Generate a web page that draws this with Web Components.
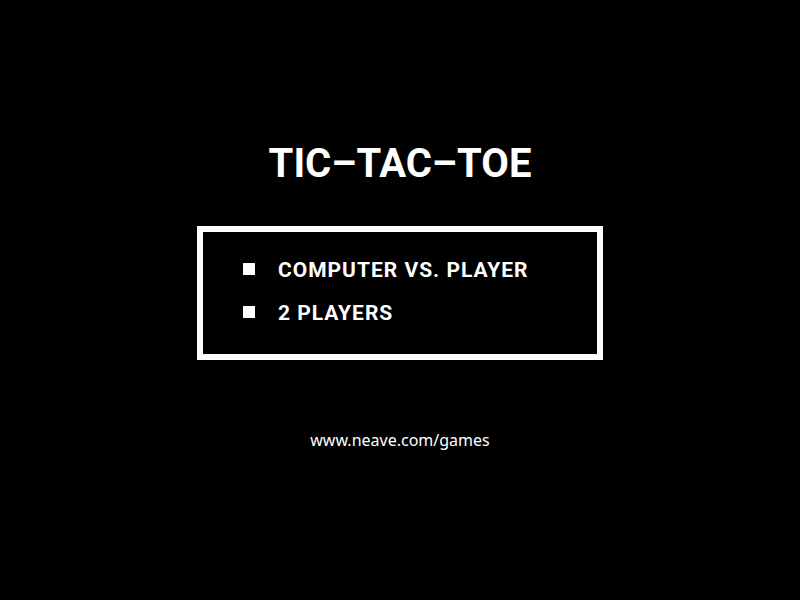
<!DOCTYPE html>
<html lang="en">
<head>
<meta charset="utf-8">
<title>Tic-Tac-Toe</title>
<style>
html,body{margin:0;height:100%;background:#000}
</style>
</head>
<body>
<tic-screen>
<game-title slot="title">TIC–TAC–TOE</game-title>
<mode-menu>
<mode-option>COMPUTER VS. PLAYER</mode-option>
<mode-option>2 PLAYERS</mode-option>
</mode-menu>
<site-link slot="footer" href="http://www.neave.com/games">www.neave.com/games</site-link>
</tic-screen>
<script>
const define = (name, html, setup) => customElements.define(name, class extends HTMLElement {
  constructor() {
    super();
    this.attachShadow({ mode: "open" }).innerHTML = html;
  }
  connectedCallback() { if (setup) setup(this); }
});
define("tic-screen", `<style>
:host{display:block;min-height:100%;background:#000;color:#fff;font-family:Roboto,"Liberation Sans",sans-serif}
main{display:flex;flex-direction:column;align-items:center;padding:144px 24px}
footer{margin-top:68px}
</style><main><slot name="title"></slot><slot></slot><footer><slot name="footer"></slot></footer></main>`);
define("game-title", `<style>
:host{display:block}
h1{margin:0;font-size:40px;line-height:40px;font-weight:700;white-space:nowrap}
</style><h1><slot></slot></h1>`);
define("mode-menu", `<style>
:host{display:block;box-sizing:border-box;width:54%;min-width:406px;margin-top:42px;border:6px solid #fff;padding:26px 40px 29px}
nav{display:flex;flex-direction:column;align-items:flex-start;gap:19px}
</style><nav aria-label="Game mode"><slot></slot></nav>`);
define("mode-option", `<style>
:host{display:block}
button{display:flex;align-items:center;gap:23px;margin:0;padding:0;border:0;background:none;color:inherit;font:700 21px/24px Roboto,"Liberation Sans",sans-serif;letter-spacing:1px;cursor:pointer;white-space:nowrap}
svg{display:block;width:12px;height:12px;margin-bottom:2px}
</style><button type="button"><svg viewBox="0 0 12 12" aria-hidden="true"><path fill="#fff" d="M0 0H12V12H0Z"/></svg><slot></slot></button>`);
define("site-link", `<style>
:host{display:block}
a{display:block;color:#fff;text-decoration:none;font:16px/24px "Noto Sans",sans-serif}
</style><a><slot></slot></a>`, el => { el.shadowRoot.querySelector("a").href = el.getAttribute("href"); });
</script>
</body>
</html>
